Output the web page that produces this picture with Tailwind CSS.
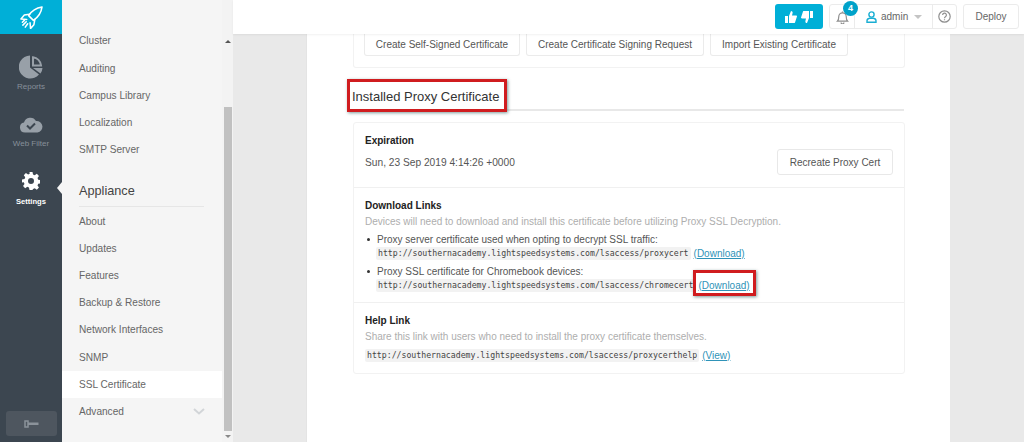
<!DOCTYPE html>
<html lang="en">
<head>
    <meta charset="UTF-8">
    <title>SSL Certificate</title>
    <script src="https://cdn.jsdelivr.net/npm/@tailwindcss/browser@4"></script>
</head>
<body class="w-[1024px] h-[442px] overflow-hidden bg-[#e9e9e9] font-['Liberation_Sans',Arial,sans-serif] text-[#555]">
<div class="flex h-[442px]">
    <!-- left rail -->
    <aside class="w-[62px] shrink-0 bg-[#3c4650] flex flex-col items-center relative">
        <div class="w-full h-[34px] bg-[#00afd7] flex items-center justify-center">
            <svg width="23" height="23" viewBox="0 0 24 24" fill="none" stroke="#fff" stroke-width="1.600" stroke-linejoin="round" stroke-linecap="round">
                <path d="M23 1c-5.500.8-10.500 3.500-14 9l5 5c5.500-3.500 8.200-8.500 9-14z"/>
                <path d="M10 8.500L4.500 9.500 1 13.500l6 .5M15.500 14l-1 5.500-3.500 4-.5-6"/>
                <path d="M6.500 16.500L3 20M8 18.500l-2.500 3.500M4.500 15L2.500 17"/>
            </svg>
        </div>
        <div class="mt-[21px] flex flex-col items-center text-[#87909a]">
            <svg width="24" height="24" viewBox="0 0 24 24"><path fill="#98a0a8" d="M11 .5a11.500 11.500 0 1 0 9 19L11 12.500z"/><path fill="none" stroke="#98a0a8" stroke-width="2" d="M14 2.300A9.500 9.500 0 0 1 22 10.500L14 10.500z"/><path fill="#98a0a8" d="M14 13h9.500a11 11 0 0 1-2 5.500z"/></svg>
            <span class="text-[8px] leading-[12px] mt-[2px]">Reports</span>
        </div>
        <div class="mt-[23px] flex flex-col items-center text-[#87909a]">
            <svg width="24" height="17" viewBox="0 0 24 16"><path fill="#98a0a8" d="M6 16a5 5 0 0 1-1-9.900A6.500 6.500 0 0 1 17 4.500 5.800 5.800 0 0 1 18.500 16z"/><path fill="none" stroke="#3c4650" stroke-width="2" d="M8 9l3 3 5-5"/></svg>
            <span class="text-[8px] leading-[12px] mt-[5px] whitespace-nowrap">Web Filter</span>
        </div>
        <div class="mt-[22px] flex flex-col items-center text-white">
            <svg width="18" height="18" viewBox="0 0 24 24"><path fill="#fff" fill-rule="evenodd" d="M10 0h4l.7 3.400 2.200.9L19.800 2.400l2.800 2.800-1.900 2.900.9 2.200 3.400.7v4l-3.400.7-.9 2.200 1.900 2.900-2.800 2.800-2.900-1.900-2.200.9L14 24h-4l-.7-3.400-2.200-.9-2.900 1.900-2.800-2.800 1.900-2.900-.9-2.200L0 14v-4l3.400-.7.9-2.200-1.900-2.900 2.800-2.800 2.900 1.900 2.200-.9zM12 8a4 4 0 1 0 0 8 4 4 0 0 0 0-8z"/></svg>
            <span class="text-[7.600px] font-bold leading-[12px] mt-[6px]">Settings</span>
        </div>
        <div class="absolute left-[57px] top-[182px] w-0 h-0 border-y-[6px] border-y-transparent border-r-[5px] border-r-[#f5f5f5]"></div>
        <div class="mt-auto mb-[6px] w-[51px] h-[25px] rounded-[3px] bg-[#4e565f] flex items-center justify-center">
            <svg width="15" height="8" viewBox="0 0 15 8"><path fill="none" stroke="#8b929a" stroke-width="1.500" d="M1 1h3v6H1z"/><path fill="#8b929a" d="M4 2.500h10.500v2.500H4z"/></svg>
        </div>
    </aside>

    <!-- settings nav -->
    <nav class="w-[160px] shrink-0 bg-[#f5f5f5] pt-[34px] text-[10.100px] text-[#666]">
        <div class="h-[13px] pl-[17px] leading-[13px]">Cluster</div>
        <ul class="mt-[8px]">
            <li class="h-[27px] pl-[17px] leading-[27px]">Auditing</li>
            <li class="h-[27px] pl-[17px] leading-[27px]">Campus Library</li>
            <li class="h-[27px] pl-[17px] leading-[27px]">Localization</li>
            <li class="h-[27px] pl-[17px] leading-[27px]">SMTP Server</li>
        </ul>
        <div class="ml-[17px] mr-[18px] mt-[15px] h-[29px] border-b border-[#e6e6e6] text-[12.700px] leading-[27px] text-[#444]">Appliance</div>
        <ul class="mt-[2px]">
            <li class="h-[27px] pl-[17px] leading-[25px]">About</li>
            <li class="h-[27px] pl-[17px] leading-[25px]">Updates</li>
            <li class="h-[27px] pl-[17px] leading-[25px]">Features</li>
            <li class="h-[27px] pl-[17px] leading-[26px]">Backup &amp; Restore</li>
            <li class="h-[27px] pl-[17px] leading-[26px]">Network Interfaces</li>
            <li class="h-[27px] pl-[17px] leading-[27px]">SNMP</li>
            <li class="h-[27px] pl-[17px] leading-[27px] bg-white">SSL Certificate</li>
            <li class="h-[27px] pl-[17px] pr-[17px] leading-[27px] flex items-center justify-between">Advanced
                <svg width="12" height="7" viewBox="0 0 12 7"><path fill="none" stroke="#d2d5d8" stroke-width="2" d="M1 1l5 4.500L11 1"/></svg>
            </li>
        </ul>
    </nav>

    <!-- nav scrollbar -->
    <div class="w-[11px] shrink-0 bg-[#f3f3f3] pt-[34px] flex flex-col items-center">
        <div class="h-[14px] flex items-center"><div class="w-0 h-0 border-x-[3px] border-x-transparent border-b-[3px] border-b-[#555]"></div></div>
        <div class="w-[8px] h-[324px] mt-[59px] bg-[#c1c1c1]"></div>
        <div class="h-[11px] flex items-center"><div class="w-0 h-0 border-x-[3px] border-x-transparent border-t-[3px] border-t-[#888]"></div></div>
    </div>

    <div class="flex-1 flex flex-col min-w-0 relative">
        <!-- top bar -->
        <header class="h-[34px] bg-white shadow-[0_1px_2px_rgba(0,0,0,0.06)] relative z-10 flex items-start justify-end pt-[4px] pr-[5px] shrink-0">
            <button class="w-[48px] h-[25px] rounded-[3px] bg-[#00afd7] flex items-center justify-center gap-[4px]">
                <svg width="12" height="12" viewBox="0 0 12 12"><path fill="#fff" d="M0 5h3v7H0zM4 5l2-5c1.200 0 1.800 1 1.600 2L7 4.500h4c1 0 1.200 1 .8 1.500L10 11.500c-.2.400-.5.500-1 .5H4z"/></svg>
                <svg width="12" height="12" viewBox="0 0 12 12"><path fill="#fff" d="M9 7h3V0H9zM8 7l-2 5c-1.200 0-1.800-1-1.600-2L5 7.500H1C0 7.500-.2 6.500.2 6L2 .5C2.200.1 2.500 0 3 0h5z"/></svg>
            </button>
            <div class="ml-[6px] h-[25px] w-[128px] rounded-[3px] border border-[#ebebeb] flex relative">
                <div class="w-[25px] flex items-center justify-center border-r border-[#ebebeb] pt-[2px]">
                    <svg width="13" height="13" viewBox="0 0 13 14" fill="none" stroke="#8f8f8f" stroke-width="1.300"><path d="M1 11h11c-1.500-1.500-1.500-3-1.500-5a4 4 0 0 0-8 0c0 2 0 3.500-1.500 5z"/><path d="M5 12.500a1.500 1.500 0 0 0 3 0M6.500 .5v1.500"/></svg>
                </div>
                <div class="w-[78px] flex items-center pl-[11px] border-r border-[#ebebeb] text-[10px] text-[#666]">
                    <svg width="11" height="12" viewBox="0 0 11 12" fill="none" stroke="#1aaed3" stroke-width="1.400"><circle cx="5.500" cy="3.500" r="2.600"/><path d="M1 11.300v-1.500c0-1.500 1.500-2.300 2.500-2.500h4c1 .2 2.500 1 2.500 2.500v1.500z"/></svg>
                    <span class="ml-[4px]">admin</span>
                    <div class="ml-[6px] w-0 h-0 border-x-[4px] border-x-transparent border-t-[4px] border-t-[#c4c4c4]"></div>
                </div>
                <div class="flex-1 flex items-center justify-center">
                    <svg width="13" height="13" viewBox="0 0 13 13" fill="none" stroke="#8f8f8f" stroke-width="1.200"><circle cx="6.500" cy="6.500" r="5.700"/><path d="M4.600 5a1.900 1.900 0 1 1 2.800 1.700c-.6.400-.9.800-.9 1.500M6.500 9.200v1.100"/></svg>
                </div>
                <span class="absolute left-[13px] -top-[4px] w-[15px] h-[15px] rounded-full bg-[#00a2c9] text-white text-[9px] font-bold leading-[15px] text-center">4</span>
            </div>
            <button class="ml-[6px] w-[56px] h-[25px] rounded-[3px] border border-[#ebebeb] text-[10px] text-[#666]">Deploy</button>
        </header>

        <div class="flex-1 flex min-h-0">
            <div class="w-[73px] shrink-0"></div>
            <!-- main content -->
            <main class="w-[644px] shrink-0 bg-white border-l border-[#e4e4e4] pl-[46px] pr-[45px] overflow-hidden">
                <div class="h-[34px] border-x border-b border-[#f2f2f2] rounded-b-[3px] pl-[10px] flex gap-[6px] items-start">
                    <button class="w-[156px] h-[22px] bg-white rounded-b-[3px] border-x border-b border-[#ebebeb] text-[10px] text-[#555]">Create Self-Signed Certificate</button>
                    <button class="w-[178px] h-[22px] bg-white rounded-b-[3px] border-x border-b border-[#ebebeb] text-[10px] text-[#555]">Create Certificate Signing Request</button>
                    <button class="w-[138px] h-[22px] bg-white rounded-b-[3px] border-x border-b border-[#ebebeb] text-[10px] text-[#555]">Import Existing Certificate</button>
                </div>

                <div class="mt-[12px] h-[31px] mr-[1px] border-b-2 border-[#e8e8e8] relative">
                    <h2 class="text-[13px] leading-[34px] text-[#333] absolute -left-[1px] top-0 whitespace-nowrap">Installed Proxy Certificate</h2>
                    <div class="absolute -left-[6px] -top-[1px] w-[160px] h-[33px] border-[3px] border-[#d01c1f] shadow-[1px_1px_3px_rgba(0,60,60,0.5)]"></div>
                </div>

                <section class="mt-[11px] border border-[#f2f2f2] rounded-[3px]">
                    <div class="h-[65px] px-[11px] pt-[11px] border-b border-[#f0f0f0] relative">
                        <h3 class="text-[10px] font-bold leading-[13px] text-[#222]">Expiration</h3>
                        <p class="mt-[9px] text-[10.200px] leading-[13px] text-[#555]">Sun, 23 Sep 2019 4:14:26 +0000</p>
                        <button class="absolute right-[11px] top-[26px] w-[116px] h-[26px] rounded-[3px] border border-[#e8e8e8] text-[10px] text-[#555]">Recreate Proxy Cert</button>
                    </div>
                    <div class="h-[115px] px-[11px] pt-[11px] border-b border-[#f0f0f0]">
                        <h3 class="text-[10px] font-bold leading-[13px] text-[#222]">Download Links</h3>
                        <p class="mt-[3px] text-[10px] leading-[13px] text-[#aeaeae]">Devices will need to download and install this certificate before utilizing Proxy SSL Decryption.</p>
                        <ul class="mt-[5px] pl-[12px] text-[10px] text-[#555]">
                            <li class="relative leading-[13px]">
                                <span class="absolute -left-[10px] top-[5px] w-[3px] h-[3px] rounded-full bg-[#333]"></span>
                                Proxy server certificate used when opting to decrypt SSL traffic:
                                <div class="flex items-center h-[14px]">
                                    <code class="-ml-[1px] px-[2px] h-[13px] leading-[13px] rounded-[2px] bg-[#f2f2f2] font-['DejaVu_Sans_Mono',monospace] text-[8.200px] text-[#444]">http://southernacademy.lightspeedsystems.com/lsaccess/proxycert</code>
                                    <a class="ml-[3px] text-[#2f93b8] underline">(Download)</a>
                                </div>
                            </li>
                            <li class="relative mt-[5px] leading-[13px]">
                                <span class="absolute -left-[10px] top-[5px] w-[3px] h-[3px] rounded-full bg-[#333]"></span>
                                Proxy SSL certificate for Chromebook devices:
                                <div class="flex items-center h-[14px] relative">
                                    <code class="-ml-[1px] px-[2px] h-[13px] leading-[13px] rounded-[2px] bg-[#f2f2f2] font-['DejaVu_Sans_Mono',monospace] text-[8.200px] text-[#444]">http://southernacademy.lightspeedsystems.com/lsaccess/chromecert</code>
                                    <a class="ml-[3px] text-[#2f93b8] underline">(Download)</a>
                                    <div class="absolute left-[316px] -top-[8px] w-[63px] h-[26px] border-[3px] border-[#d01c1f] shadow-[1px_1px_3px_rgba(0,60,60,0.5)]"></div>
                                </div>
                            </li>
                        </ul>
                    </div>
                    <div class="h-[70px] px-[11px] pt-[11px]">
                        <h3 class="text-[10px] font-bold leading-[13px] text-[#222]">Help Link</h3>
                        <p class="mt-[3px] text-[10px] leading-[13px] text-[#aeaeae]">Share this link with users who need to install the proxy certificate themselves.</p>
                        <div class="mt-[5px] flex items-center h-[14px] text-[10px]">
                            <code class="px-[2px] h-[13px] leading-[13px] rounded-[2px] bg-[#f2f2f2] font-['DejaVu_Sans_Mono',monospace] text-[8.200px] text-[#444]">http://southernacademy.lightspeedsystems.com/lsaccess/proxycerthelp</code>
                            <a class="ml-[3px] text-[#2f93b8] underline">(View)</a>
                        </div>
                    </div>
                </section>
            </main>
        </div>
    </div>
</div>
</body>
</html>
